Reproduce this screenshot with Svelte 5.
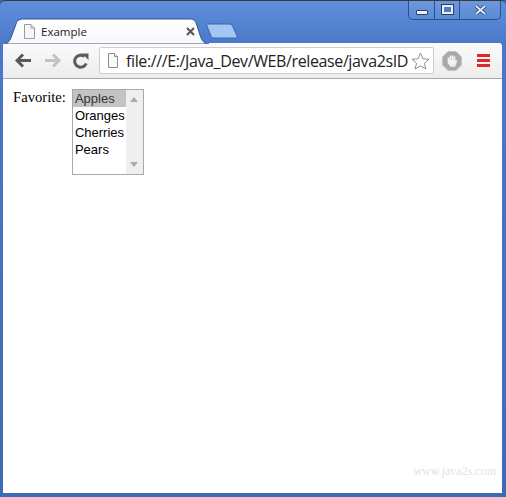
<script>
  const options = ['Apples', 'Oranges', 'Cherries', 'Pears'];
</script>

<div class="window">
  <header class="strip">
    <div class="tab">
      <svg class="tab-shape" width="206" height="26" viewBox="0 0 206 26"><path d="M0 26C5 26 7 23 9 17L13 6C14 2 17 1 21 1H186C190 1 192 2 193.500 6L197 17C199 23 201 26 206 26Z" fill="url(#tabfill)" stroke="#2f5595" stroke-width="1"/><defs><linearGradient id="tabfill" x1="0" y1="0" x2="0" y2="1"><stop offset="0" stop-color="#ffffff"/><stop offset="1" stop-color="#f8f8f8"/></linearGradient></defs></svg>
      <svg class="page-icon" width="13" height="15" viewBox="0 0 13 15"><path d="M1.500.5H8L11.500 4V14.500H1.500Z" fill="#f6f6f6" stroke="#9a9a9a"/><path d="M8 .5V4H11.500" fill="#e8e8e8" stroke="#9a9a9a"/></svg>
      <span class="tab-title">Example</span>
      <svg class="tab-close" width="9" height="9" viewBox="0 0 9 9"><path d="M1 1L8 8M8 1L1 8" stroke="#555" stroke-width="2"/></svg>
    </div>
    <svg class="new-tab" width="33" height="16" viewBox="0 0 33 16"><path d="M1 1H23C25 1 26 2 27 4L31 13C31.500 14.500 31 15 30 15H8C6 15 5.500 14 5 13L1 3C.5 1.500.5 1 1 1Z" fill="#a5c5f2" stroke="#3c64a8"/></svg>
    <div class="controls">
      <span class="ctl min"><i></i></span>
      <span class="ctl max"><i></i></span>
      <span class="ctl close"><svg width="13" height="10" viewBox="0 0 13 10"><path d="M2 1L11 9M11 1L2 9" stroke="#24406f" stroke-width="3.400"/><path d="M2 1L11 9M11 1L2 9" stroke="#e8eef8" stroke-width="1.800"/></svg></span>
    </div>
  </header>

  <nav class="toolbar">
    <svg class="tool" width="17" height="15" viewBox="0 0 17 15"><path d="M8 1.500L2 7.500L8 13.500M2.500 7.500H16" fill="none" stroke="#5a5a5a" stroke-width="3"/></svg>
    <svg class="tool fwd" width="17" height="15" viewBox="0 0 17 15"><path d="M9 1.500L15 7.500L9 13.500M14.500 7.500H1" fill="none" stroke="#c2c2c2" stroke-width="3"/></svg>
    <svg class="tool reload" width="16" height="16" viewBox="0 0 16 16"><path d="M13.200 10.500A6 6 0 1 1 11.500 3.500" fill="none" stroke="#5a5a5a" stroke-width="3"/><path d="M9 0.500H15.500V7Z" fill="#5a5a5a"/></svg>
    <div class="omnibox">
      <svg width="12" height="15" viewBox="0 0 12 15"><path d="M1.500.5H7.500L10.500 3.500V14.500H1.500Z" fill="#fafafa" stroke="#8c8c8c"/><path d="M7.500 .5V3.500H10.500" fill="#e8e8e8" stroke="#8c8c8c"/></svg>
      <span class="url">file:///E:/Java_Dev/WEB/release/java2sID</span>
      <svg class="star" width="19" height="18" viewBox="0 0 19 18"><path d="M9.500 1L12 6.800L18 7.300L13.400 11.200L14.900 17L9.500 13.900L4.100 17L5.600 11.200L1 7.300L7 6.800Z" fill="#fff" stroke="#8f8f8f"/></svg>
    </div>
    <svg class="adblock" width="20" height="20" viewBox="0 0 20 20"><path d="M6 0.500H14L19.500 6V14L14 19.500H6L0.500 14V6Z" fill="#a9a9a9" stroke="#c4c4c4"/><path d="M6.500 9V6.500M8.500 9V4.500M10.500 9V4.500M12.500 9.500V5.500M6.500 8V11.500L9 15H12.500L14 11V9" fill="none" stroke="#f2f2f2" stroke-width="1.700"/><path d="M7 9H13V13L11 14.500H9L7 12Z" fill="#f2f2f2"/></svg>
    <div class="menu"><i></i><i></i><i></i></div>
  </nav>

  <main class="page">
    <div class="form">
      <label class="label" for="fruit">Favorite:</label>
      <div class="select" id="fruit">
        <ul class="list">
          {#each options as option, i}
            <li class:selected={i === 0}>{option}</li>
          {/each}
        </ul>
        <div class="scrollbar">
          <span class="arrow up"></span>
          <span class="arrow down"></span>
        </div>
      </div>
    </div>
    <div class="watermark">www.java2s.com</div>
  </main>
</div>

<style>
  :global(body) {
    margin: 0;
    background: #3a66b4;
  }
  .window {
    width: 506px;
    height: 497px;
    box-sizing: border-box;
    display: flex;
    flex-direction: column;
    padding: 2px 4px 4px 3px;
    background: linear-gradient(180deg, #5f8fdb 0, #4a78c8 45px, #3f6ab8 100%);
    border-top: 1px solid #3a3a3a;
    border-radius: 5px 5px 0 0;
    overflow: hidden;
  }
  .strip {
    height: 40px;
    flex: none;
    display: flex;
    align-items: flex-end;
    position: relative;
  }
  .tab {
    position: relative;
    width: 206px;
    height: 26px;
    display: flex;
    align-items: center;
    box-sizing: border-box;
    padding: 1px 14px 0 20px;
    margin-bottom: -1px;
    z-index: 1;
  }
  .tab-shape {
    position: absolute;
    left: 0;
    top: 0;
  }
  .page-icon, .tab-title, .tab-close {
    position: relative;
  }
  .tab-title {
    margin-left: 5px;
    font: 11.500px "Open Sans", "Liberation Sans", sans-serif;
    color: #222;
    flex: 1;
  }
  .new-tab {
    margin: 0 0 4px -3px;
  }
  .controls {
    position: absolute;
    right: 1px;
    top: -3px;
    width: 93px;
    height: 20px;
    box-sizing: border-box;
    display: flex;
    border: 1px solid #2d4f8c;
    border-top: 0;
    border-radius: 0 0 5px 5px;
    background: linear-gradient(180deg, #6d99dc, #5b89d3);
  }
  .ctl {
    display: flex;
    align-items: center;
    justify-content: center;
    border-right: 1px solid #2d4f8c;
    box-sizing: border-box;
  }
  .ctl.min { width: 26px; }
  .ctl.max { width: 25px; }
  .ctl.close { flex: 1; border-right: 0; }
  .min i {
    width: 10px;
    height: 3px;
    margin-top: 6px;
    background: #eef3fb;
    border: 1px solid #24406f;
    border-radius: 1px;
  }
  .max i {
    width: 7px;
    height: 5px;
    border: 2px solid #e8eef8;
    outline: 1px solid #24406f;
    background: #4f7bc4;
  }
  .toolbar {
    height: 36px;
    flex: none;
    box-sizing: border-box;
    display: flex;
    align-items: center;
    padding: 0 9px 0 12px;
    background: linear-gradient(180deg, #fbfbfb, #ececec);
    border-bottom: 1px solid #a8a8a8;
    border-radius: 0 3px 0 0;
  }
  .tool { flex: none; margin-right: 12px; }
  .reload { margin-right: 10px; }
  .omnibox {
    width: 335px;
    height: 27px;
    flex: none;
    box-sizing: border-box;
    display: flex;
    align-items: center;
    padding-left: 7px;
    background: #fff;
    border: 1px solid #cdcdcd;
    border-radius: 2px;
    position: relative;
  }
  .url {
    margin-left: 7px;
    width: 282px;
    flex: none;
    font: 16px "Open Sans", "Liberation Sans", sans-serif;
    letter-spacing: -0.38px;
    white-space: nowrap;
    color: #222;
  }
  .star { margin-left: 3px; }
  .adblock { margin-left: 8px; flex: none; }
  .menu {
    margin-left: 15px;
    width: 13px;
    display: flex;
    flex-direction: column;
    gap: 2px;
  }
  .menu i {
    height: 3px;
    background: #e0292b;
  }
  .page {
    flex: 1;
    position: relative;
    background: #fff;
    padding: 10px 0 0 10px;
  }
  .form {
    display: flex;
    align-items: flex-start;
    gap: 6px;
  }
  .label {
    font: 14.667px/16px "Liberation Serif", serif;
    color: #000;
  }
  .select {
    width: 72px;
    height: 86px;
    box-sizing: border-box;
    display: flex;
    border: 1px solid #a9a9a9;
    background: #fff;
  }
  .list {
    flex: 1;
    margin: 0;
    padding: 0;
    list-style: none;
    font: 13px/17px "Liberation Sans", sans-serif;
    color: #000;
  }
  .list li { padding-left: 2px; height: 17px; }
  .list li.selected { background: #c3c3c3; color: #333; }
  .scrollbar {
    width: 17px;
    flex: none;
    display: flex;
    flex-direction: column;
    justify-content: space-between;
    align-items: center;
    padding: 7px 0;
    box-sizing: border-box;
    background: #efefef;
  }
  .arrow {
    width: 0;
    height: 0;
    border-left: 4px solid transparent;
    border-right: 4px solid transparent;
  }
  .arrow.up { border-bottom: 5px solid #a8a8a8; }
  .arrow.down { border-top: 5px solid #a8a8a8; }
  .watermark {
    position: absolute;
    right: 6px;
    bottom: 14px;
    font: 12px "Liberation Serif", serif;
    color: #e3e3e3;
  }
</style>
